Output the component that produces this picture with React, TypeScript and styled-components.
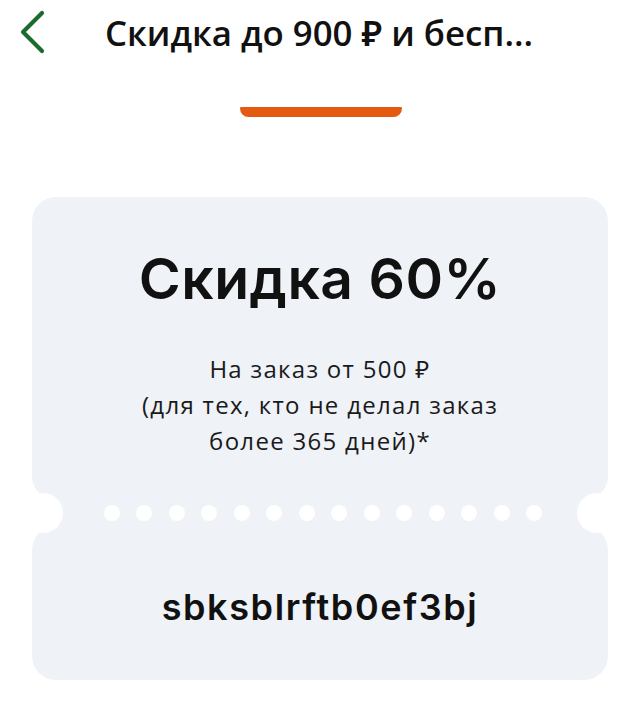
import React from "react"
import styled, { createGlobalStyle } from "styled-components"

const GlobalStyle = createGlobalStyle`
	body {
		margin: 0;
		background: #ffffff;
		font-family: "Open Sans", "Noto Sans", sans-serif;
		color: #111111;
	}
`

const CARD_BG = "#eff2f7"

const SPage = styled.div`
	display: flex;
	flex-direction: column;
	width: 640px;
	height: 714px;
	overflow: hidden;
`

const SHeader = styled.div`
	display: flex;
	align-items: center;
	height: 64px;
	padding: 0 0 0 18px;
`

const SBack = styled.div`
	display: flex;
	width: 28px;
	height: 44px;
	align-items: center;
	justify-content: center;
`

const STitle = styled.div`
	margin: 0 0 0 59px;
	font-size: 34.8px;
	font-weight: 600;
	white-space: nowrap;
`

const STab = styled.div`
	align-self: center;
	width: 162px;
	height: 10px;
	margin: 43px 0 0 2px;
	background-color: #e35a10;
	border-radius: 2px 2px 12px 12px;
`

const SCard = styled.div`
	display: flex;
	flex-direction: column;
	width: 576px;
	margin: 80px 0 0 32px;
`

const SPart = styled.div<{ $height: number }>`
	display: flex;
	flex-direction: column;
	align-items: center;
	justify-content: center;
	height: ${(p) => p.$height}px;
	background-color: ${CARD_BG};
	border-radius: 24px;
`

const SStrip = styled.div`
	position: relative;
	display: flex;
	height: 26px;
	align-items: center;
	justify-content: center;
	gap: 16.5px;
	padding: 0 0 0 6px;
	background-color: ${CARD_BG};

	&::before,
	&::after {
		content: "";
		position: absolute;
		top: -7px;
		width: 40px;
		height: 40px;
		border-radius: 50%;
		background: #ffffff;
	}
	&::before {
		left: -9px;
	}
	&::after {
		right: -9px;
	}
`

const SDot = styled.div`
	width: 16px;
	height: 16px;
	border-radius: 50%;
	background: #ffffff;
`

const SHeading = styled.div`
	font-family: "Inter", "Lato", sans-serif;
	font-size: 57px;
	font-weight: 600;
	letter-spacing: 0.5px;
	margin: 6px 0 38px 0;
`

const SText = styled.div`
	font-size: 24px;
	line-height: 36px;
	letter-spacing: 1.3px;
	text-align: center;
	color: #1a1a1a;
`

const SCode = styled.div`
	font-family: "Inter", "Lato", sans-serif;
	font-size: 36px;
	font-weight: 600;
	letter-spacing: 1.6px;
	margin: 8px 0 0 0;
`

export default function App() {
	const dots = Array.from({ length: 14 })
	return (
		<SPage>
			<GlobalStyle />
			<SHeader>
				<SBack>
					<svg width="28" height="44" viewBox="0 0 28 44" fill="none">
						<path
							d="M24 3 L5 22 L24 41"
							stroke="#1d6a2f"
							strokeWidth="4.2"
							strokeLinecap="round"
							strokeLinejoin="round"
						/>
					</svg>
				</SBack>
				<STitle>Скидка до 900 ₽ и бесп...</STitle>
			</SHeader>
			<STab />
			<SCard>
				<SPart $height={303}>
					<SHeading>Скидка 60%</SHeading>
					<SText>
						На заказ от 500 ₽
						<br />
						(для тех, кто не делал заказ
						<br />
						более 365 дней)*
					</SText>
				</SPart>
				<SStrip>
					{dots.map((_, i) => (
						<SDot key={i} />
					))}
				</SStrip>
				<SPart $height={154}>
					<SCode>sbksblrftb0ef3bj</SCode>
				</SPart>
			</SCard>
		</SPage>
	)
}
